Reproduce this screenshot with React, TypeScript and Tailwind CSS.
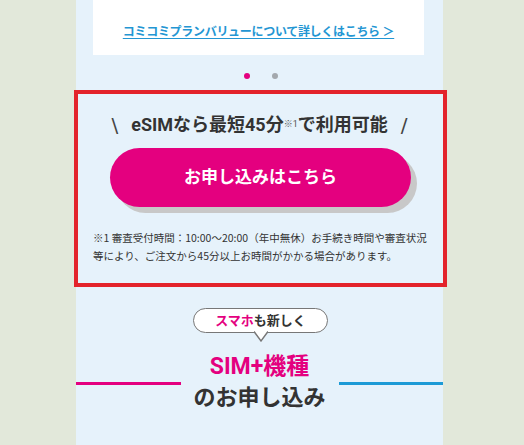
export default function App() {
  return (
    <div className="min-h-[445px] overflow-hidden bg-[#e2e8da] font-['Roboto','Noto_Sans_CJK_JP',sans-serif] text-[#333]">
      <div className="ml-[76px] min-h-[445px] w-[367px] bg-[#e6f2fb] pb-[32px]">
        {/* plan card */}
        <div className="ml-[17px] flex h-[55px] w-[331px] justify-center bg-white pt-[23px]">
          <a href="#" className="text-[12px] font-bold leading-[18px] tracking-[-0.3px] text-[#2396d3] underline underline-offset-2">
            コミコミプランバリューについて詳しくはこちら ＞
          </a>
        </div>

        {/* carousel dots */}
        <div className="mt-[18px] flex justify-center gap-[22px] pl-[3px]">
          <span className="h-[6px] w-[6px] rounded-full bg-[#e4007f]" />
          <span className="h-[6px] w-[6px] rounded-full bg-[#a3a8ad]" />
        </div>

        {/* highlighted apply block */}
        <section className="-mr-[4px] -ml-[2px] mt-[11px] h-[197px] border-[4px] border-[#e3232b] pt-[18px]">
          <p className="flex items-center justify-center gap-[13px] pr-[2px] text-[18px] font-bold leading-[26px]">
            <span className="font-['DejaVu_Sans',sans-serif] text-[20px] font-normal text-[#444]">\</span>
            <span>
              eSIMなら最短45分<sup className="text-[9px] font-normal text-[#555]">※1</sup>で利用可能
            </span>
            <span className="font-['DejaVu_Sans',sans-serif] text-[20px] font-normal text-[#444]">/</span>
          </p>
          <button className="mx-auto mt-[10px] flex h-[59px] w-[301px] items-center justify-center rounded-full bg-[#e4007f] text-[17px] font-bold text-white shadow-[6px_6px_0_#c8c8c8]">
            お申し込みはこちら
          </button>
          <p className="mt-[22px] pl-[15px] font-['Noto_Sans_CJK_JP',sans-serif] text-[10.5px] leading-[18px] whitespace-nowrap text-[#333]">
            ※1 審査受付時間：10:00～20:00（年中無休）お手続き時間や審査状況
            <br />
            等により、ご注文から45分以上お時間がかかる場合があります。
          </p>
        </section>

        {/* sim + device */}
        <div className="mt-[21px] flex justify-center pl-[2px]">
          <div className="relative flex h-[25px] w-[135px] items-center justify-center rounded-full border-[1.5px] border-[#777] bg-white text-[13px] font-bold">
            <span className="text-[#e4007f]">スマホ</span>
            <span>も新しく</span>
            <svg className="absolute -bottom-[10px] left-[60px]" width="14" height="11" viewBox="0 0 14 11">
              <polygon points="0,0 14,0 7,10" fill="#fff" />
              <polyline points="0,0.5 7,10 14,0.5" fill="none" stroke="#777" strokeWidth="1.4" />
            </svg>
          </div>
        </div>
        <div className="mt-[20px] flex items-center">
          <span className="h-[3px] flex-1 bg-[#e4007f]" />
          <div className="w-[158px] text-center font-bold">
            <p className="text-[23px] leading-[28px] text-[#e4007f]">SIM+機種</p>
            <p className="mt-[2px] text-[22px] leading-[30px] text-[#333]">のお申し込み</p>
          </div>
          <span className="h-[3px] flex-1 bg-[#1c9ad6]" />
        </div>
      </div>
    </div>
  );
}
